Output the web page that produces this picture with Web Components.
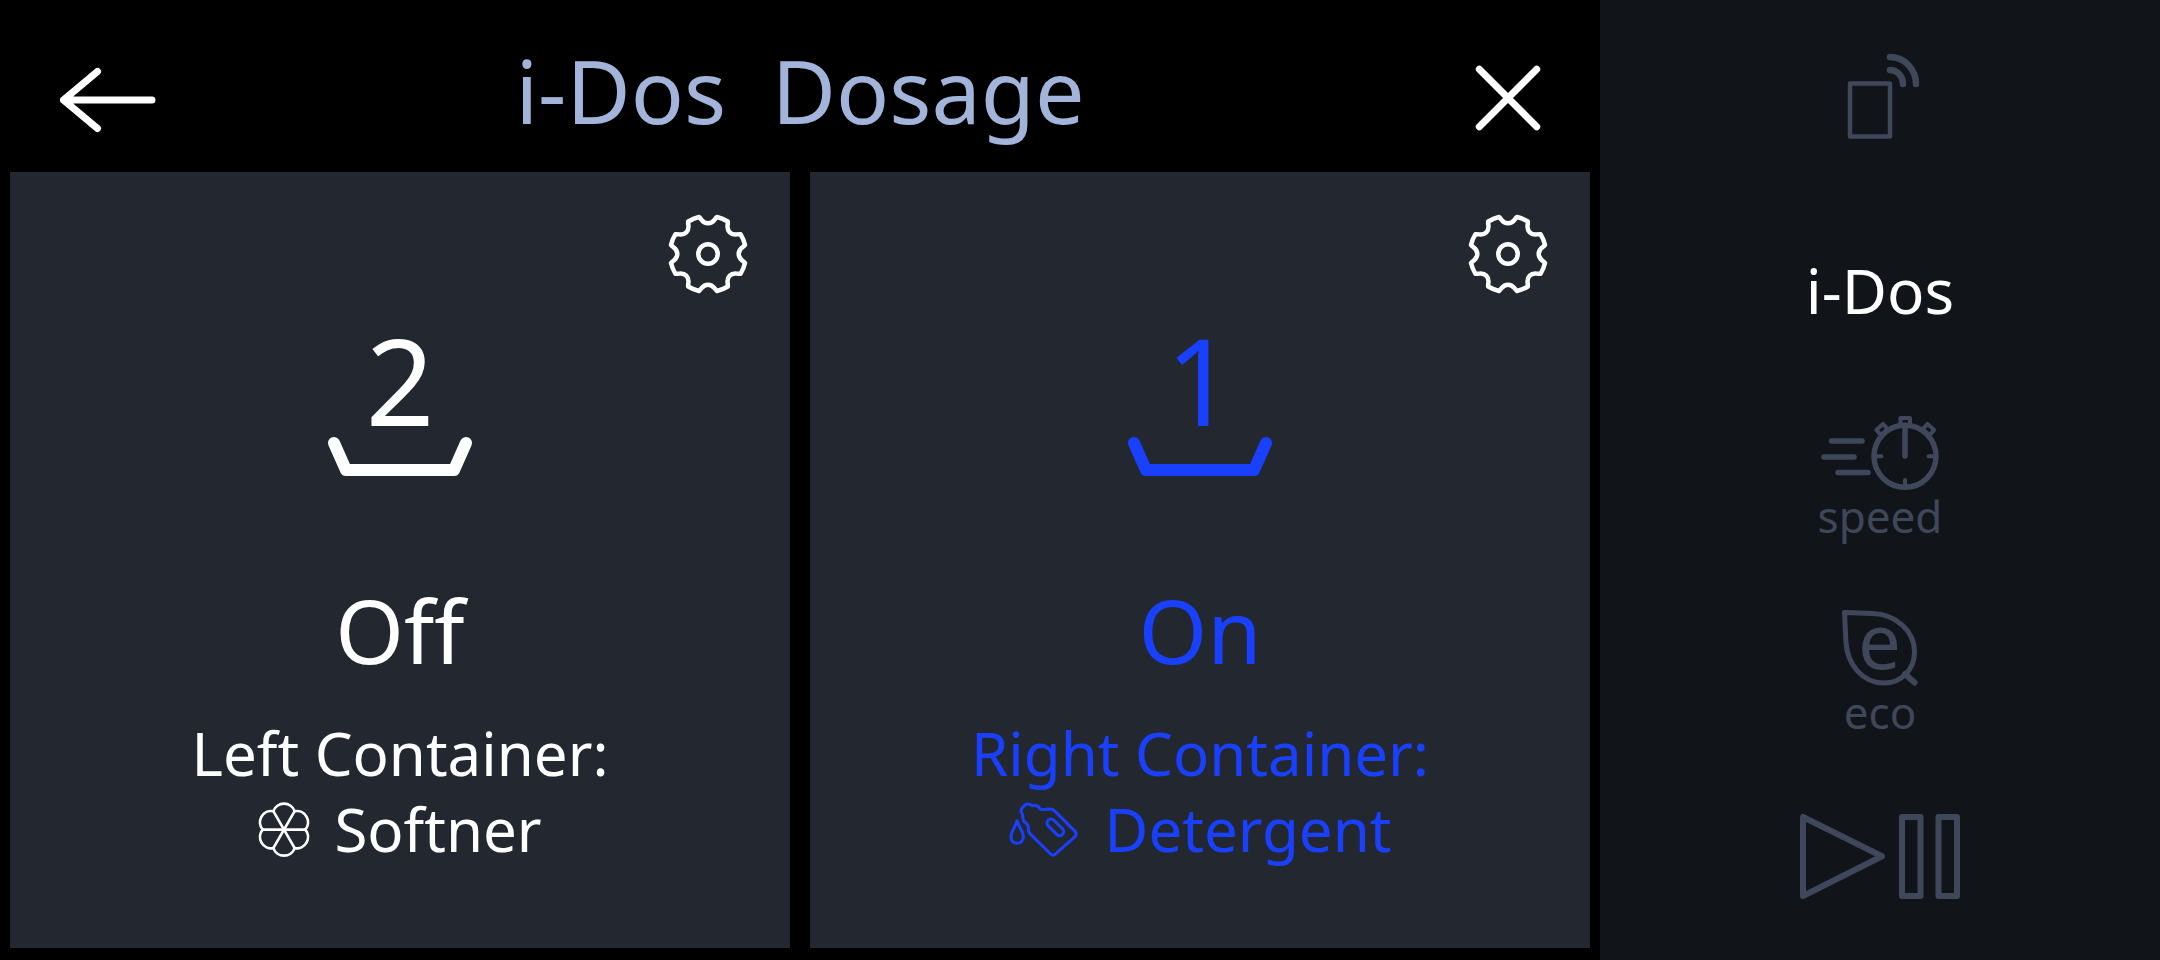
<!DOCTYPE html>
<html lang="en">
<head>
<meta charset="utf-8">
<title>i-Dos Dosage</title>
<style>
  body {
    margin: 0;
    background: #000;
    color: #fff;
    font-family: "Noto Sans", "Open Sans", sans-serif;
    font-variant-ligatures: none;
  }
</style>
</head>
<body>
<washer-panel>
  <panel-header slot="header">i-Dos&nbsp; Dosage</panel-header>
  <dosage-card number="2" status="Off" container="Left Container:">
    <agent-icon slot="icon" kind="flower"></agent-icon>
    Softner
  </dosage-card>
  <dosage-card number="1" status="On" container="Right Container:" active>
    <agent-icon slot="icon" kind="bottle"></agent-icon>
    Detergent
  </dosage-card>
  <option-rail slot="rail"></option-rail>
</washer-panel>

<script>
  const define = (name, html) => {
    const template = document.createElement('template');
    customElements.define(name, class extends HTMLElement {
      connectedCallback() {
        if (this.shadowRoot) return;
        template.innerHTML = typeof html === 'function' ? html(this) : html;
        this.attachShadow({ mode: 'open' }).append(template.content.cloneNode(true));
      }
    });
  };

  // Shared reset for buttons that only hold an icon or a label.
  const buttonReset = `
    button {
      margin: 0; padding: 0; border: 0; background: none;
      color: inherit; font: inherit; cursor: pointer;
    }
    svg {
      display: block; overflow: visible; fill: none;
      stroke: currentColor; stroke-linecap: round; stroke-linejoin: round;
    }
  `;

  // Outline of the eight-toothed gear, built one notch at a time.
  const gearPath = () => {
    const turn = (x, y, a) => {
      const c = Math.cos(a), s = Math.sin(a);
      return (x * c - y * s).toFixed(2) + ' ' + (x * s + y * c).toFixed(2);
    };
    let d = '';
    for (let i = 0; i < 8; i++) {
      const a = i * Math.PI / 4;
      const p = (x, y) => turn(x, y, a);
      d += (i ? 'A38 38 0 0 1 ' : 'M') + p(-9, -37) +
        'C' + p(-5.5, -34) + ' ' + p(-5.5, -30.7) + ' ' + p(0, -30.7) +
        'C' + p(5.5, -30.7) + ' ' + p(5.5, -34) + ' ' + p(9, -37);
    }
    return d + 'A38 38 0 0 1 ' + turn(-9, -37, 0) + 'Z';
  };

  define('washer-panel', `
    <style>
      :host { display: grid; grid-template-columns: 20fr 7fr; min-height: 100vh; }
      main { display: flex; flex-direction: column; min-width: 0; }
      .cards { flex: 1; display: grid; grid-template-columns: 1fr 1fr; gap: 20px; padding: 0 10px 12px; }
    </style>
    <main>
      <slot name="header"></slot>
      <div class="cards"><slot></slot></div>
    </main>
    <slot name="rail"></slot>
  `);

  define('panel-header', `
    <style>
      ${buttonReset}
      :host { display: block; }
      header {
        box-sizing: border-box; height: 172px; padding: 0 52px 32px;
        display: grid; grid-template-columns: 1fr auto 1fr; align-items: end;
      }
      h1 { margin: 0; font-size: 88px; line-height: 100px; font-weight: 400; color: #a2b4da; }
      .close { justify-self: end; }
      .back { justify-self: start; padding-left: 8px; }
    </style>
    <header>
      <button class="back" aria-label="Back">
        <svg width="96" height="80" viewBox="60 60 96 80" stroke-width="7"><path d="M152 100H63.500M97.500 71.500L63.500 100L97.500 128.500"/></svg>
      </button>
      <h1><slot></slot></h1>
      <button class="close" aria-label="Close">
        <svg width="80" height="80" viewBox="-40 -38 80 80" stroke-width="7"><path d="M-28.700-28.700L28.700 28.700M28.700-28.700L-28.700 28.700"/></svg>
      </button>
    </header>
  `);

  define('dosage-card', el => `
    <style>
      ${buttonReset}
      :host {
        box-sizing: border-box; display: flex; flex-direction: column; align-items: center;
        padding: 42px; background: #232830; text-align: center;
      }
      :host([active]) { --tone: #1a40ff; }
      .settings { align-self: flex-end; }
      .level, .status, .agent { color: var(--tone, #fff); }
      .level { margin-top: 30px; font-size: 120px; line-height: 112px; }
      .level svg { margin: 0 auto; }
      .status { margin-top: 102px; font-size: 88px; line-height: 100px; }
      .agent { margin-top: 35px; font-size: 60px; line-height: 76px; }
      .name { display: flex; align-items: center; justify-content: center; gap: 24px; }
    </style>
    <button class="settings" aria-label="Settings for ${el.getAttribute('container').replace(':', '')}">
      <svg width="80" height="80" viewBox="-40 -40 80 80" stroke-width="4.500">
        <path d="${gearPath()}"/><circle r="9.700"/>
      </svg>
    </button>
    <div class="level">
      ${el.getAttribute('number')}
      <svg width="144" height="42" viewBox="328 436 144 42" stroke-width="12"><path d="M334 443L346 470H454L466 443"/></svg>
    </div>
    <div class="status">${el.getAttribute('status')}</div>
    <div class="agent">
      <div>${el.getAttribute('container')}</div>
      <div class="name"><slot name="icon"></slot><span><slot></slot></span></div>
    </div>
  `);

  const agentIcons = {
    flower: `<svg width="52" height="56" viewBox="-78 -86 156 168" stroke-width="8">
      <path d="M-64 0H64M-32-55.400L32 55.400M32-55.400L-32 55.400"/>
      <path d="M-64 0A34 34 0 0 1-32-55.400A34 34 0 0 1 32-55.400A34 34 0 0 1 64 0A34 34 0 0 1 32 55.400A34 34 0 0 1-32 55.400A34 34 0 0 1-64 0Z"/>
    </svg>`,
    bottle: `<svg width="72" height="56" viewBox="130 274 216 168" stroke-width="9">
      <path d="M154 333C150 350 136 365 136 382C136 394 144 401 154 401C165 401 173 394 173 382C173 365 158 350 154 333Z"/>
      <path d="M186 346C184 340 172 338 172 328C173 315 168 312 166 305C164 298 176 286 184 283C192 281 194 288 204 288C214 287 219 291 222 296C226 302 232 299 240 299L254 298Q261 298 266 303L329 366Q334 373 329 380L269 433Q262 440 255 433L192 371C184 362 192 354 186 346Z"/>
      <rect x="-30" y="-12" width="60" height="24" rx="11" transform="translate(269 353) rotate(45)"/>
    </svg>`
  };

  define('agent-icon', el => `
    <style>${buttonReset} :host { display: block; }</style>
    ${agentIcons[el.getAttribute('kind')]}
  `);

  define('option-rail', `
    <style>
      ${buttonReset}
      :host { display: block; background: #111519; color: #3f475b; }
      nav { height: 100%; display: grid; grid-template-rows: repeat(5, 1fr); }
      button { display: flex; flex-direction: column; align-items: center; justify-content: center; }
      .current { padding-top: 4px; color: #fff; font-size: 62px; line-height: 76px; }
      .small { font-size: 44px; line-height: 48px; }
      .speed { padding-bottom: 6px; }
      .start { padding-bottom: 14px; }
      text { font-size: 76px; fill: currentColor; stroke: none; }
    </style>
    <nav aria-label="Options">
      <button aria-label="Remote start">
        <svg width="200" height="92" viewBox="1780 50 200 92">
          <rect x="1850" y="83.500" width="40" height="53" stroke-width="4.500"/>
          <path stroke-width="6.500" d="M1890 70A13 14 0 0 1 1903 84M1890 57A26 27 0 0 1 1916 84"/>
        </svg>
      </button>
      <button class="current" aria-current="true">i-Dos</button>
      <button class="small speed">
        <svg width="200" height="78" viewBox="1780 414 200 78" stroke-width="5.500">
          <path d="M1831.500 441H1862M1824 457H1854M1838 472.500H1868M1905 426V456"/>
          <circle cx="1905" cy="456.300" r="31"/>
          <path stroke-width="4" d="M1877 456.300H1881.500M1928.500 456.300H1933M1905 480V485"/>
          <g stroke-width="4">
            <rect x="1900.500" y="418" width="9.500" height="7"/>
            <rect x="-4.500" y="-3.500" width="9" height="7" transform="translate(1882 429.500) rotate(-42)"/>
            <rect x="-4.500" y="-3.500" width="9" height="7" transform="translate(1928.500 429.500) rotate(42)"/>
          </g>
        </svg>
        speed
      </button>
      <button class="small">
        <svg width="200" height="80" viewBox="1780 608 200 80" stroke-width="5">
          <path d="M1844.500 612.500L1872 613.500C1897 614 1914.500 632 1914.500 652C1914.500 670 1901 683 1884 683C1862 683 1847.500 664 1846 643Z"/>
          <path stroke-width="6" d="M1905 674L1914.500 682.500"/>
          <text x="1858" y="669">e</text>
        </svg>
        eco
      </button>
      <button class="start" aria-label="Start or pause">
        <svg width="200" height="90" viewBox="1780 812 200 90" stroke-width="6">
          <path d="M1803 817V896L1882 856.300Z"/>
          <rect x="1902" y="817" width="18.500" height="79"/>
          <rect x="1938.500" y="817" width="18.500" height="79"/>
        </svg>
      </button>
    </nav>
  `);
</script>
</body>
</html>
